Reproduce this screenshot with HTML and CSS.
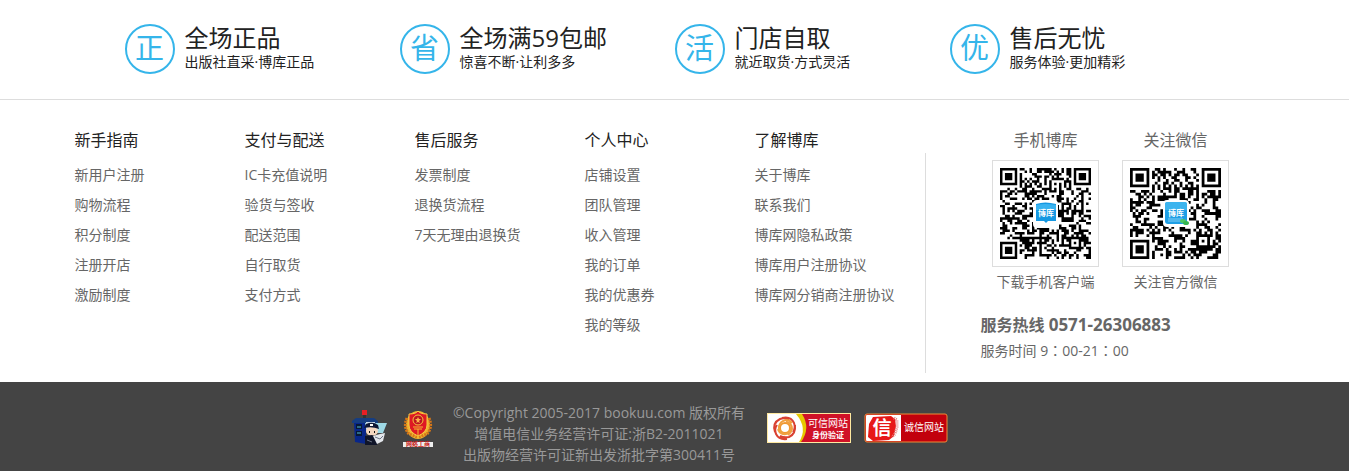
FILE: index.html
```html
<!DOCTYPE html>
<html lang="zh-CN">
<head>
<meta charset="utf-8">
<title>博库网</title>
<link rel="stylesheet" href="styles.css">
</head>
<body>
<section class="promises">
  <ul class="promise-list">
    <li class="promise"><span class="seal">正</span><div><h2>全场正品</h2><p>出版社直采·博库正品</p></div></li>
    <li class="promise"><span class="seal">省</span><div><h2>全场满59包邮</h2><p>惊喜不断·让利多多</p></div></li>
    <li class="promise"><span class="seal">活</span><div><h2>门店自取</h2><p>就近取货·方式灵活</p></div></li>
    <li class="promise"><span class="seal">优</span><div><h2>售后无忧</h2><p>服务体验·更加精彩</p></div></li>
  </ul>
</section>

<section class="help">
  <nav class="help-columns">
    <div class="column"><h3>新手指南</h3><ul>
      <li><a href="#">新用户注册</a></li><li><a href="#">购物流程</a></li><li><a href="#">积分制度</a></li><li><a href="#">注册开店</a></li><li><a href="#">激励制度</a></li></ul></div>
    <div class="column"><h3>支付与配送</h3><ul>
      <li><a href="#">IC卡充值说明</a></li><li><a href="#">验货与签收</a></li><li><a href="#">配送范围</a></li><li><a href="#">自行取货</a></li><li><a href="#">支付方式</a></li></ul></div>
    <div class="column"><h3>售后服务</h3><ul>
      <li><a href="#">发票制度</a></li><li><a href="#">退换货流程</a></li><li><a href="#">7天无理由退换货</a></li></ul></div>
    <div class="column"><h3>个人中心</h3><ul>
      <li><a href="#">店铺设置</a></li><li><a href="#">团队管理</a></li><li><a href="#">收入管理</a></li><li><a href="#">我的订单</a></li><li><a href="#">我的优惠券</a></li><li><a href="#">我的等级</a></li></ul></div>
    <div class="column"><h3>了解博库</h3><ul>
      <li><a href="#">关于博库</a></li><li><a href="#">联系我们</a></li><li><a href="#">博库网隐私政策</a></li><li><a href="#">博库用户注册协议</a></li><li><a href="#">博库网分销商注册协议</a></li></ul></div>
  </nav>
  <div class="divider"></div>
  <div class="contact">
    <div class="codes">
      <div class="code">
        <h3>手机博库</h3>
        <svg class="qr" viewBox="0 0 105 105" role="img" aria-label="手机客户端二维码">
          <path class="modules" data-size="37" data-seed="57"/>
          <rect x="40" y="39" width="25" height="28" rx="4" fill="#fff"/>
          <path d="M43 43q9-3 20 0v17h-8l-2 2-2-2h-8z" fill="#1598e2"/>
          <path d="M43 44q9-2 20 0v5H43z" fill="#39b3f0"/>
          <text class="qr-mark" x="53" y="55">博库</text>
        </svg>
        <p>下载手机客户端</p>
      </div>
      <div class="code">
        <h3>关注微信</h3>
        <svg class="qr" viewBox="0 0 105 105" role="img" aria-label="官方微信二维码">
          <path class="modules" data-size="33" data-seed="91"/>
          <rect x="40" y="39" width="26" height="27" rx="4" fill="#fff"/>
          <rect x="42" y="41" width="22" height="22" rx="3" fill="#1e9fe6"/>
          <path d="M44 41h18q2 0 2 2v6H42v-6q0-2 2-2z" fill="#3cb4ee"/>
          <path d="M45 58h15M45 60h13" stroke="#83cff4"/>
          <text class="qr-mark" x="53" y="55">博库</text>
          <ellipse cx="60" cy="60" rx="3" ry="2" fill="#4cc764"/><ellipse cx="63" cy="62" rx="3" ry="2" fill="#35b650"/>
        </svg>
        <p>关注官方微信</p>
      </div>
    </div>
    <p class="hotline">服务热线 <strong>0571-26306883</strong></p>
    <p class="hours">服务时间 9<span lang="zh-TW">：</span>00-21<span lang="zh-TW">：</span>00</p>
  </div>
</section>

<footer class="footer">
  <div class="footer-inner">
    <a class="police" href="#" aria-label="网络警察">
      <svg width="36" height="36" viewBox="0 0 36 36">
        <rect x="10" y="0" width="5" height="5" fill="#e81f24"/><path d="M11 5h3v4h-3z" fill="#333"/>
        <path d="M0 11L4 8h18l4 3v2H0z" fill="#163d80"/><path d="M2 13h12v21L3 32z" fill="#08268a"/>
        <path d="M4 14h6v5H4zM4 21h6v5H4z" fill="#071836"/><path d="M5 17h4M5 23h4" stroke="#56bdd0"/>
        <path d="M13 13h22l-4 10H15z" fill="#9ed9e6"/><path d="M14 12h9v7h-9z" fill="#c6d8e9"/>
        <ellipse cx="20" cy="21" rx="6" ry="5" fill="#f3d6bf"/><path d="M12 18l2-4q7-3 12 1l1 4q-7-3-15-1z" fill="#101835"/>
        <path d="M18 14h3v2h-3z" fill="#fff"/><path d="M17 22h1M22 22h1" stroke="#111" stroke-width="2"/>
        <path d="M13 26l7-1 7 3-2 7H13z" fill="#101529"/><path d="M21 26l7-2 5-1-2 8-6 3z" fill="#e4e7ec"/>
        <path d="M23 27l5 2 3-3M15 30l5 2" fill="none" stroke="#6d7485"/>
      </svg>
    </a>
    <a class="emblem" href="#" aria-label="网络工商">
      <svg width="32" height="38" viewBox="0 0 32 38">
        <ellipse cx="16" cy="16" rx="12" ry="14" fill="#eeb532"/>
        <path d="M5 9Q1 18 7 25l8 3M27 9q4 9-2 16l-8 3" fill="none" stroke="#d87717" stroke-width="3" stroke-dasharray="2 1"/>
        <path d="M16 2q2 3 9 3v11q0 7-9 11-9-4-9-11V5q7 0 9-3z" fill="#df1924" stroke="#f8ca41"/>
        <circle cx="16" cy="11" r="5" fill="#bd1520" stroke="#f4c53e"/><path d="M16 8l1 2h2l-2 2 1 2-2-1-2 1 1-2-2-2h2z" fill="#ffb14d"/>
        <path d="M11 18h10M12 20h8M16 20v7" stroke="#f4bd32"/>
        <path d="M1 33h30v5H1z" fill="#eee"/><text x="16" y="37" class="emblem-text">网络工商</text>
      </svg>
    </a>
    <div class="legal">
      <p>©Copyright 2005-2017 bookuu.com 版权所有</p>
      <p>增值电信业务经营许可证:浙B2-2011021</p>
      <p>出版物经营许可证新出发浙批字第300411号</p>
    </div>
    <a class="badge" href="#" aria-label="可信网站 身份验证">
      <svg width="84" height="30" viewBox="0 0 84 30">
        <rect width="84" height="30" fill="#ffe9a0"/><rect x="1" y="1" width="82" height="28" fill="#d01127"/>
        <path d="M1 1h34q9 14-1 28H1z" fill="#e6c900"/><path d="M1 1h28q12 14 3 28H1z" fill="#fff"/>
        <g fill="none" stroke-width="2">
          <circle cx="18" cy="15" r="5" stroke="#ef9730"/>
          <path d="M8 19q-3-9 5-13 5-2 9 1M15 5q9-2 12 5 2 5-1 9M28 12q1 9-6 12-5 1-9-1M20 26q-8 1-11-5-2-5 1-9" stroke="#d94132"/>
          <path d="M12 14q1-6 7-7 4 0 6 3M19 9q6 1 6 7-1 4-4 6M24 16q-2 6-8 5-4-1-5-5M17 21q-6-2-5-8" stroke="#f0a040"/>
        </g>
        <text x="61" y="14" class="badge-title">可信网站</text><text x="61" y="25" class="badge-sub">身份验证</text>
      </svg>
    </a>
    <a class="badge" href="#" aria-label="诚信网站">
      <svg width="84" height="30" viewBox="0 0 84 30">
        <rect x="1" y="1" width="82" height="28" rx="2" fill="#c2000c" stroke="#ed8b36"/>
        <path d="M3 2h34v26H3q-1 0-1-1V3q0-1 1-1z" fill="#fff"/>
        <path d="M9 4l18-1 4 3 1 7-2 10-5 4-16 1-5-4 1-13z" fill="#e71818"/>
        <path d="M30 5l3 2v7l-2 7-3 3" fill="none" stroke="#e58282" stroke-dasharray="1 1" stroke-width="3"/>
        <text x="18" y="22" class="badge-seal">信</text><text x="60" y="18" class="badge-name">诚信网站</text>
      </svg>
    </a>
  </div>
</footer>
<script src="qr.js"></script>
</body>
</html>
```

FILE: styles.css
```css
* { box-sizing: border-box; }
body, h2, h3, p, ul { margin: 0; padding: 0; }
body {
  background: #fff;
  color: #666;
  font-family: "Open Sans", "Noto Sans CJK SC", sans-serif;
  font-size: 14px;
  line-height: 20px;
}
h2, h3 { font-weight: 400; }
ul { list-style: none; }
a { color: inherit; text-decoration: none; }
svg { display: block; }
[lang="zh-TW"] { font-family: "Noto Sans CJK TC", sans-serif; }

.promises { border-bottom: 1px solid #ddd; padding: 24px 0 25px; }
.promise-list { display: grid; grid-template-columns: repeat(4, 1fr); max-width: 1100px; margin: 0 auto; }
.promise { display: flex; gap: 10px; color: #222; }
.promise h2 { font-size: 24px; line-height: 28px; }
.promise p { line-height: 20px; }
.seal {
  display: flex; align-items: center; justify-content: center;
  width: 50px; height: 50px;
  border: 2px solid #35b5ea; border-radius: 50%;
  color: #35b5ea; font-size: 29px; line-height: 44px; padding-bottom: 2px;
}

.help { display: flex; max-width: 1200px; margin: 0 auto; padding: 30px 0 9px; }
.help-columns { display: grid; grid-template-columns: repeat(5, 170px); }
.column h3 { color: #222; font-size: 16px; line-height: 20px; margin-bottom: 10px; }
.column li { line-height: 30px; white-space: nowrap; }
.divider { width: 1px; height: 220px; margin-top: 23px; background: #ddd; }
.contact { margin-left: 55px; }
.codes { display: flex; }
.code { display: flex; flex-direction: column; align-items: center; width: 130px; }
.code h3 { font-size: 16px; line-height: 20px; margin-bottom: 10px; }
.qr { width: 107px; height: 107px; border: 1px solid #ddd; margin-bottom: 5px; }
.qr-mark { fill: #fff; font-size: 8px; font-weight: 700; text-anchor: middle; }
.hotline { margin-top: 23px; font-size: 16px; font-weight: 700; line-height: 20px; }
.hotline strong { font-size: 17px; font-weight: 700; }
.hours { margin-top: 5px; }

.footer { background: #444; color: #999; padding: 20px 50px 6px 0; }
.footer-inner { display: flex; justify-content: center; align-items: flex-start; }
.legal { min-width: 303px; margin: 0 16px 0 14px; text-align: center; line-height: 21px; }
.police { margin: 8px 14px 0 0; }
.emblem { margin-top: 7px; }
.badge { margin-top: 11px; }
.badge + .badge { margin-left: 13px; }
.emblem-text { fill: #c71c20; font-size: 6px; font-weight: 700; text-anchor: middle; }
.badge-title, .badge-sub, .badge-name, .badge-seal { fill: #fff; text-anchor: middle; }
.badge-title { font-size: 10px; }
.badge-sub { font-size: 8px; font-weight: 700; }
.badge-name { font-size: 10px; }
.badge-seal { font-size: 19px; font-weight: 700; }
```

FILE: qr.js
```js
// Draws a square code: finder, alignment and timing patterns plus data modules.
document.querySelectorAll('.modules').forEach(function (path) {
  var n = Number(path.dataset.size);
  var state = Number(path.dataset.seed);
  var unit = 91 / n;
  var d = '';
  function ring(x, y, cx, cy) { return Math.max(Math.abs(x - cx), Math.abs(y - cy)); }
  function random() { state = (state * 1103515245 + 12345) % 2147483648; return state / 2147483648; }
  for (var y = 0; y < n; y++) {
    for (var x = 0; x < n; x++) {
      var on = random() < 0.5;
      [[3, 3], [n - 4, 3], [3, n - 4]].forEach(function (c) {
        var r = ring(x, y, c[0], c[1]);
        if (r <= 4) on = r === 3 || r < 2;
      });
      var a = ring(x, y, n - 7, n - 7);
      if (a <= 2) on = a !== 1;
      if ((y === 6 && x > 7 && x < n - 8) || (x === 6 && y > 7 && y < n - 8)) on = (x + y) % 2 === 0;
      if (on) d += 'M' + (7 + x * unit) + ' ' + (7 + y * unit) + 'h' + unit + 'v' + unit + 'h-' + unit + 'z';
    }
  }
  path.setAttribute('d', d);
});
```
